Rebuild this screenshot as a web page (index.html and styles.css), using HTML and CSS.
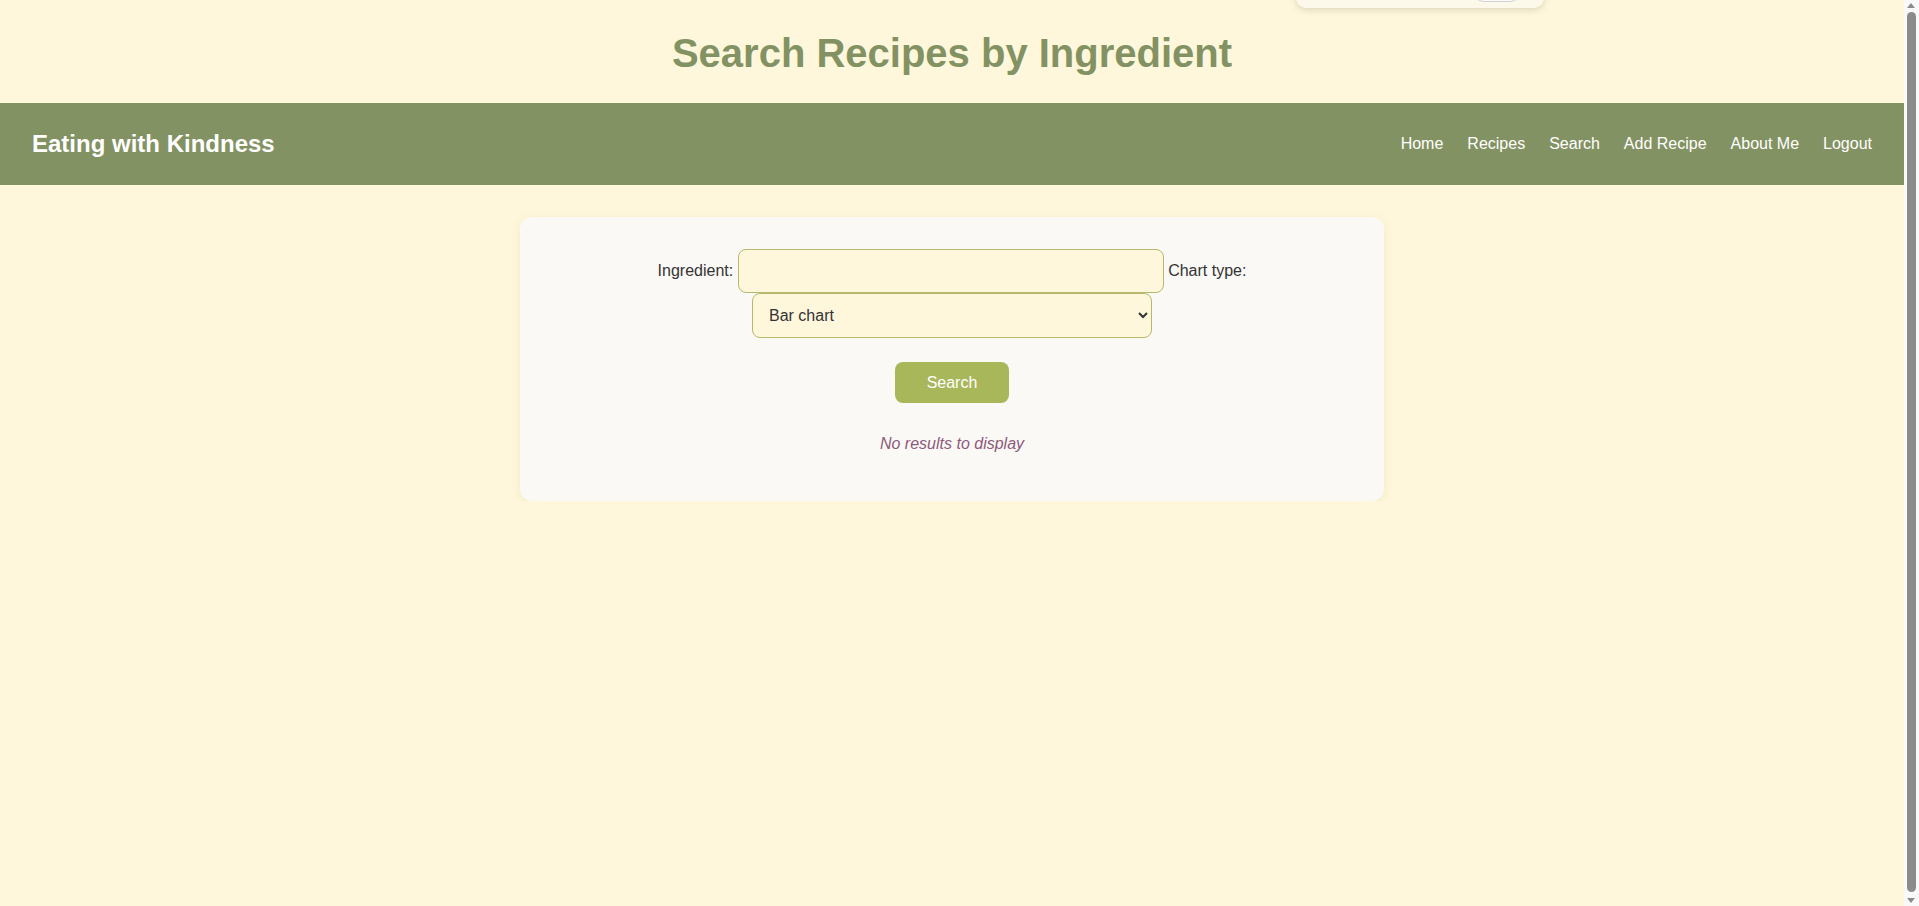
FILE: index.html
```html
<!DOCTYPE html>
<html lang="en">
<head>
<meta charset="utf-8">
<title>Search Recipes by Ingredient</title>
<link rel="stylesheet" href="styles.css">
</head>
<body>
<div class="popup"><span class="popup-btn"></span></div>
<header class="page-header">
  <h1>Search Recipes by Ingredient</h1>
</header>
<nav class="navbar">
  <a class="brand" href="#">Eating with Kindness</a>
  <ul class="nav-links">
    <li><a href="#">Home</a></li>
    <li><a href="#">Recipes</a></li>
    <li><a href="#">Search</a></li>
    <li><a href="#">Add Recipe</a></li>
    <li><a href="#">About Me</a></li>
    <li><a href="#">Logout</a></li>
  </ul>
</nav>
<main class="container">
  <section class="card">
    <form class="search-form">
      <label for="ingredient">Ingredient:</label>
      <input id="ingredient" type="text">
      <label for="chart">Chart type:</label>
      <select id="chart">
        <option>Bar chart</option>
        <option>Pie chart</option>
      </select>
      <button type="button" class="search-btn">Search</button>
    </form>
    <p class="no-results">No results to display</p>
  </section>
</main>
<div class="scrollbar" aria-hidden="true">
  <span class="arrow arrow-up"></span>
  <span class="thumb"></span>
  <span class="arrow arrow-down"></span>
</div>
</body>
</html>
```
FILE: styles.css
```css
html {
  margin: 0;
}
body {
  margin: 0 15px 0 0;
  background: #fef7dc;
  font-family: "Liberation Sans", Arial, sans-serif;
  color: #333;
  position: relative;
}
.popup {
  position: absolute;
  top: -50px;
  left: 1296px;
  width: 248px;
  height: 58px;
  background: #fdf9ea;
  border-radius: 10px;
  box-shadow: 0 2px 6px rgba(150, 140, 100, 0.3);
}
.popup-btn {
  position: absolute;
  right: 22px;
  bottom: 6px;
  width: 48px;
  height: 30px;
  border: 1px solid #cfd3d6;
  border-radius: 12px;
  background: #fcfbf6;
}
.page-header h1 {
  margin: 0;
  padding: 30px 0 27px;
  text-align: center;
  font-size: 40px;
  line-height: 46px;
  font-weight: bold;
  color: #839262;
}
.navbar {
  display: flex;
  justify-content: space-between;
  align-items: center;
  height: 82px;
  padding: 0 32px;
  background: #839262;
}
.brand {
  font-size: 24px;
  font-weight: bold;
  color: #ffffff;
  text-decoration: none;
}
.nav-links {
  display: flex;
  gap: 24px;
  list-style: none;
  margin: 0;
  padding: 0;
}
.nav-links a {
  color: #ffffff;
  font-size: 16px;
  text-decoration: none;
}
.container {
  padding-top: 32px;
}
.card {
  width: 800px;
  margin: 0 auto;
  padding: 32px;
  background: #faf9f5;
  border-radius: 12px;
  box-shadow: 0 2px 10px rgba(200, 180, 100, 0.18);
}
.search-form {
  text-align: center;
  font-size: 16px;
}
.search-form input,
.search-form select {
  font-family: inherit;
  font-size: 16px;
  color: #333;
  padding: 12px;
  border: 1px solid #b6b96c;
  border-radius: 8px;
  background: #fef7dc;
}
.search-form input {
  width: 400px;
  box-sizing: content-box;
}
.search-form select {
  width: 400px;
}
.search-btn {
  display: block;
  margin: 24px auto 0;
  padding: 12px 32px;
  line-height: 17px;
  border: none;
  border-radius: 8px;
  background: #a9b75b;
  color: #ffffff;
  font-family: inherit;
  font-size: 16px;
}
.no-results {
  margin: 32px 0 16px;
  text-align: center;
  font-style: italic;
  color: #8e5a7c;
}
.scrollbar {
  position: fixed;
  top: 0;
  right: 0;
  width: 15px;
  height: 100%;
  background: #f9f9f9;
}
.thumb {
  position: absolute;
  top: 12px;
  bottom: 14px;
  left: 3px;
  width: 9px;
  border-radius: 5px;
  background: #8b8b8b;
}
.arrow {
  position: absolute;
  left: 3px;
  width: 0;
  height: 0;
  border-left: 4.5px solid transparent;
  border-right: 4.5px solid transparent;
}
.arrow-up {
  top: 3px;
  border-bottom: 5px solid #8b8b8b;
}
.arrow-down {
  bottom: 3px;
  border-top: 5px solid #8b8b8b;
}
```
